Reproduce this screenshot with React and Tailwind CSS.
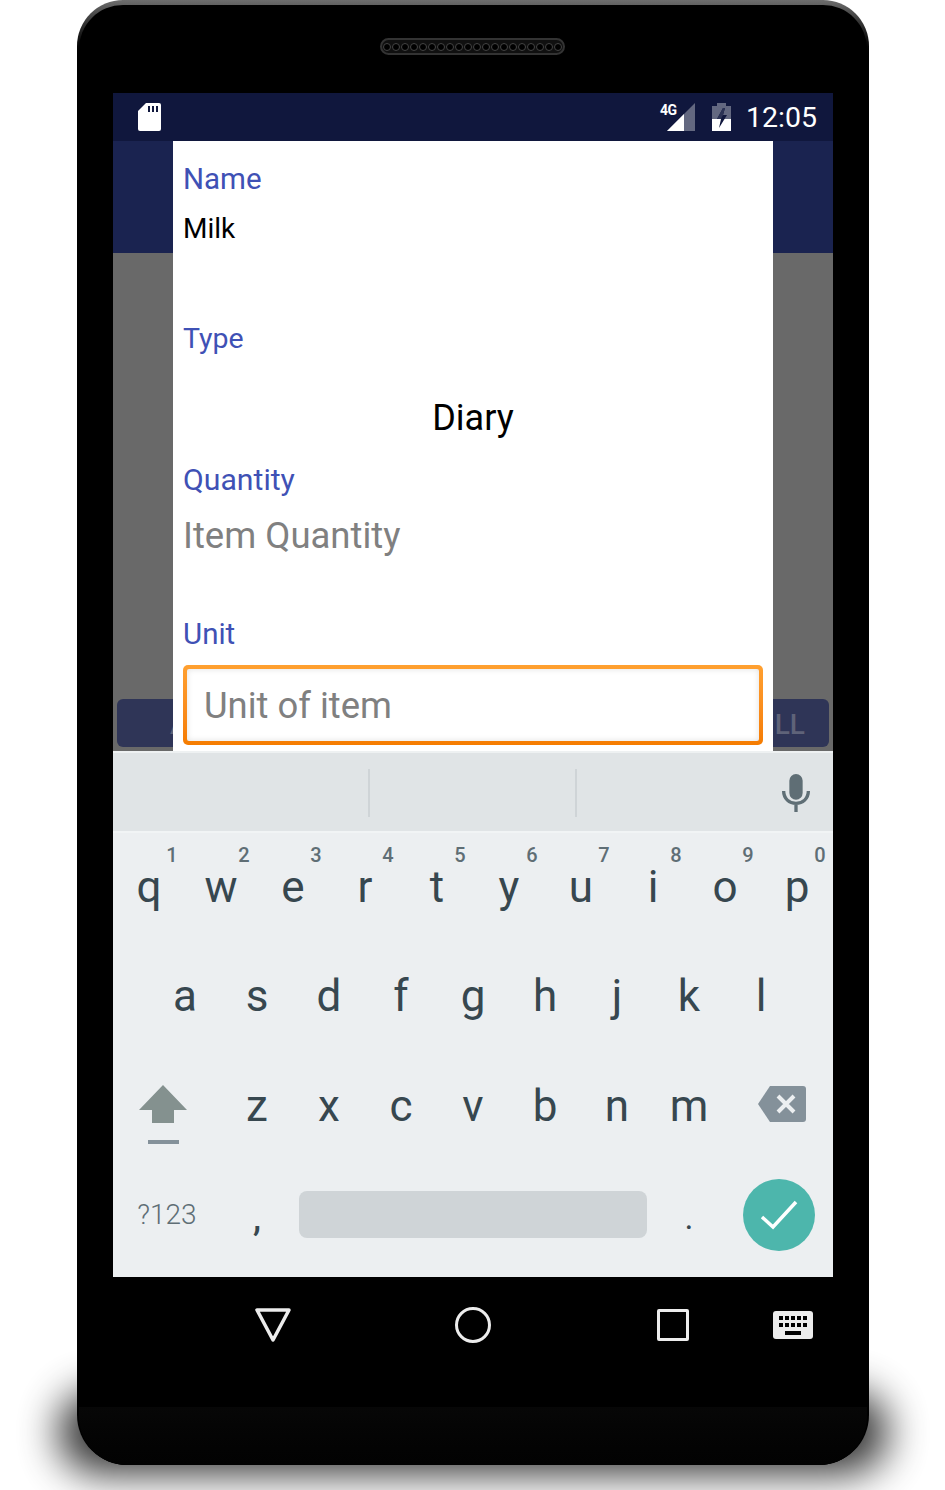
import { Fragment } from 'react'

const FONT = "font-['Roboto','Liberation_Sans',sans-serif]"

const ROW_1 = [['q', '1'], ['w', '2'], ['e', '3'], ['r', '4'], ['t', '5'], ['y', '6'], ['u', '7'], ['i', '8'], ['o', '9'], ['p', '0']]
const ROW_2 = ['a', 's', 'd', 'f', 'g', 'h', 'j', 'k', 'l']
const ROW_3 = ['z', 'x', 'c', 'v', 'b', 'n', 'm']

function Key({ label, hint }) {
  return (
    <div className="relative w-[72px] h-full flex items-center justify-center text-[44px] font-normal text-[#37474f]">
      {label}
      {hint && <span className="absolute right-[7px] top-[10px] w-[12px] text-center leading-[24px] text-[20px] font-medium text-[#5f6e75]">{hint}</span>}
    </div>
  )
}

function SpeakerGrille() {
  return (
    <div className="w-[185px] h-[17px] mt-[33px] mr-[1px] rounded-full border-2 border-[#333] bg-[#101010] flex items-center justify-center gap-[1px]">
      {Array.from({ length: 20 }).map((_, i) => (
        <span key={i} className="w-[8px] h-[8px] rounded-full border border-[#444] bg-black" />
      ))}
    </div>
  )
}

function StatusBar() {
  return (
    <div className="h-[48px] bg-[#10173d] flex items-center pl-[25px] pr-[16px]">
      <svg width="23" height="28" viewBox="0 0 23 28">
        <path d="M8 0h13a2 2 0 0 1 2 2v24a2 2 0 0 1-2 2H2a2 2 0 0 1-2-2V8z" fill="#fff" />
        <rect x="10" y="3" width="2" height="6" fill="#10173d" />
        <rect x="14" y="3" width="2" height="6" fill="#10173d" />
        <rect x="18" y="3" width="2" height="6" fill="#10173d" />
      </svg>
      <div className="ml-auto relative w-[36px] h-[28px]">
        <span className="absolute left-[1px] top-[-2px] text-[14px] leading-[18px] font-bold tracking-[-0.5px] text-white">4G</span>
        <svg className="absolute left-[8px] top-0" width="28" height="28" viewBox="0 0 28 28">
          <path d="M28 0v28H0z" fill="#fff" fillOpacity="0.35" />
          <path d="M17 11v17H0z" fill="#fff" />
        </svg>
      </div>
      <svg className="ml-[17px]" width="19" height="28" viewBox="0 0 19 28">
        <path d="M5 0h9v3h5v25H0V3h5z" fill="#fff" fillOpacity="0.35" />
        <path d="M0 16h19v12H0z" fill="#fff" />
        <path d="M11 5l-6 11h4l-2 9 8-13h-4l2-7z" fill="#10173d" />
        <path d="M11 5l-6 11h4l2-4h0l2-7z" fill="#2c3355" />
      </svg>
      <span className="ml-[15px] pt-[3px] text-[28.5px] leading-none text-white">12:05</span>
    </div>
  )
}

function FormDialog() {
  return (
    <div className="absolute left-[60px] top-0 w-[600px] h-[610px] bg-white px-[10px] pt-[13px] overflow-hidden">
      <p className="h-[49px] leading-[50px] text-[29.5px] text-[#3f51b5]">Name</p>
      <p className="h-[50px] leading-[52px] text-[28px] text-black">Milk</p>
      <p className="mt-[61px] h-[50px] leading-[50px] text-[28.5px] text-[#3f51b5]">Type</p>
      <p className="mt-[28px] h-[54px] leading-[52px] text-[36px] text-black text-center">Diary</p>
      <p className="mt-[9px] h-[50px] leading-[50px] text-[30.2px] text-[#3f51b5]">Quantity</p>
      <p className="mt-[5px] h-[54px] leading-[52px] text-[36.5px] text-[#808080]">Item Quantity</p>
      <p className="mt-[45px] h-[50px] leading-[50px] text-[29.5px] text-[#3f51b5]">Unit</p>
      <div className="mt-[6px] w-[580px] h-[80px] rounded-[5px] p-[4px] bg-gradient-to-b from-[#ffa030] to-[#f57c00]">
        <div className="h-full bg-white rounded-[2px] flex items-center pl-[17px] pt-[2px] text-[36.4px] text-[#808080] shadow-[inset_0_0_6px_rgba(0,0,0,0.12)]">
          Unit of item
        </div>
      </div>
    </div>
  )
}

function Keyboard() {
  return (
    <div className="h-[526px] bg-[#eceff1] flex flex-col">
      <div className="h-[82px] bg-[#e0e4e6] border-t-2 border-t-[#eef1f2] border-b-2 border-b-[#f1f4f5] pt-[2px] flex items-center">
        <div className="w-[257px] h-[48px] border-r-2 border-[#cfd4d7]" />
        <div className="w-[207px] h-[48px] border-r-2 border-[#cfd4d7]" />
        <svg className="ml-auto mr-[22px]" width="30" height="38" viewBox="0 0 30 40">
          <rect x="8" y="0" width="14" height="27" rx="7" fill="#5f6e75" />
          <path d="M2 18c0 8 6 13 13 13s13-5 13-13M15 31v9" fill="none" stroke="#5f6e75" strokeWidth="3.5" />
        </svg>
      </div>
      <div className="flex flex-col">
        <div className="h-[108px] flex">
          {ROW_1.map(([k, n]) => <Key key={k} label={k} hint={n} />)}
        </div>
        <div className="h-[110px] flex pl-[36px]">
          {ROW_2.map(k => <Key key={k} label={k} />)}
        </div>
        <div className="h-[110px] flex">
          <div className="w-[108px] flex flex-col items-center pt-[34px] pr-[8px]">
            <svg width="48" height="38" viewBox="0 0 48 38">
              <path d="M24 0l24 25H35v13H13V25H0z" fill="#84918f" />
            </svg>
            <div className="mt-[17px] w-[31px] h-[4px] bg-[#84919a]" />
          </div>
          {ROW_3.map(k => <Key key={k} label={k} />)}
          <div className="w-[108px] flex items-start pt-[35px] pl-[33px]">
            <svg width="48" height="36" viewBox="0 0 48 36">
              <path d="M12 0h33a3 3 0 0 1 3 3v30a3 3 0 0 1-3 3H12L0 18z" fill="#84919a" />
              <path d="M20 10l16 16M36 10L20 26" stroke="#eceff1" strokeWidth="4" />
            </svg>
          </div>
        </div>
        <div className="h-[110px] pb-[3px] flex items-center">
          <div className="w-[108px] text-center text-[28px] font-light text-[#5f6e75]">?123</div>
          <div className="w-[72px] text-center text-[36px] font-medium text-[#37474f] pt-[6px]">,</div>
          <div className="w-[360px] px-[6px]">
            <div className="h-[47px] rounded-[8px] bg-[#cfd4d7]" />
          </div>
          <div className="w-[72px] text-center text-[34px] text-[#37474f] pt-[6px]">.</div>
          <div className="w-[108px] flex justify-center">
            <div className="w-[72px] h-[72px] rounded-full bg-[#4db6ac] flex items-center justify-center">
              <svg width="38" height="30" viewBox="0 0 38 30">
                <path d="M2 17l11 10L36 2" fill="none" stroke="#fff" strokeWidth="3.5" />
              </svg>
            </div>
          </div>
        </div>
      </div>
    </div>
  )
}

function NavBar() {
  return (
    <div className="h-[130px] relative flex">
      <svg className="absolute left-[142px] top-[31px]" width="36" height="34" viewBox="0 0 36 34">
        <path d="M2 2h32L18 32z" fill="none" stroke="#ececec" strokeWidth="3.5" strokeLinejoin="round" />
      </svg>
      <div className="absolute left-[342px] top-[30px] w-[36px] h-[36px] rounded-full border-[3.5px] border-[#ececec]" />
      <div className="absolute left-[544px] top-[32px] w-[32px] h-[32px] rounded-[2px] border-[3.5px] border-[#ececec]" />
      <svg className="absolute left-[660px] top-[34px]" width="40" height="28" viewBox="0 0 40 28">
        <rect width="40" height="28" rx="3" fill="#ececec" />
        {[0, 1, 2, 3, 4].map(i => (
          <Fragment key={i}>
            <rect x={6 + i * 6} y="5" width="4" height="4" fill="#000" />
            <rect x={6 + i * 6} y="12" width="4" height="4" fill="#000" />
          </Fragment>
        ))}
        <rect x="12" y="20" width="16" height="4" fill="#000" />
      </svg>
    </div>
  )
}

export default function App() {
  return (
    <div className={`relative w-[945px] h-[1490px] bg-white overflow-hidden ${FONT}`}>
      {/* drop shadow under the phone */}
      <div className="absolute left-[58px] top-[1390px] w-[830px] h-[84px] rounded-[50px] bg-black opacity-80 blur-[20px]" />

      <div className="relative ml-[77px] w-[792px] h-[1465px] rounded-t-[46px] rounded-b-[50px] bg-gradient-to-b from-[#6e6e6e] via-black via-[4%] to-black px-[2px] pt-[5px]">
        <div className="h-full rounded-t-[44px] rounded-b-[48px] bg-black flex flex-col overflow-hidden">
          <div className="h-[88px] flex justify-center">
            <SpeakerGrille />
          </div>

          <div className="px-[34px]">
            <StatusBar />
            <div className="relative h-[610px] bg-[#696969] flex flex-col">
              <div className="h-[112px] bg-[#1a2350]" />
              <div className="mt-auto mb-[4px] flex justify-between px-[4px] text-[28px] text-[#5f6379]">
                <div className="w-[340px] h-[48px] rounded-[6px] bg-[#2f3557] flex items-center pl-[53px] pt-[4px] font-medium">A</div>
                <div className="w-[340px] h-[48px] rounded-[6px] bg-[#2f3557] flex items-center justify-end pr-[24px] pt-[4px] font-medium">LL</div>
              </div>
              <FormDialog />
            </div>
            <Keyboard />
            <NavBar />
          </div>

          <div className="flex-1 bg-gradient-to-b from-[#070707] to-[#020202]" />
        </div>
      </div>
    </div>
  )
}
